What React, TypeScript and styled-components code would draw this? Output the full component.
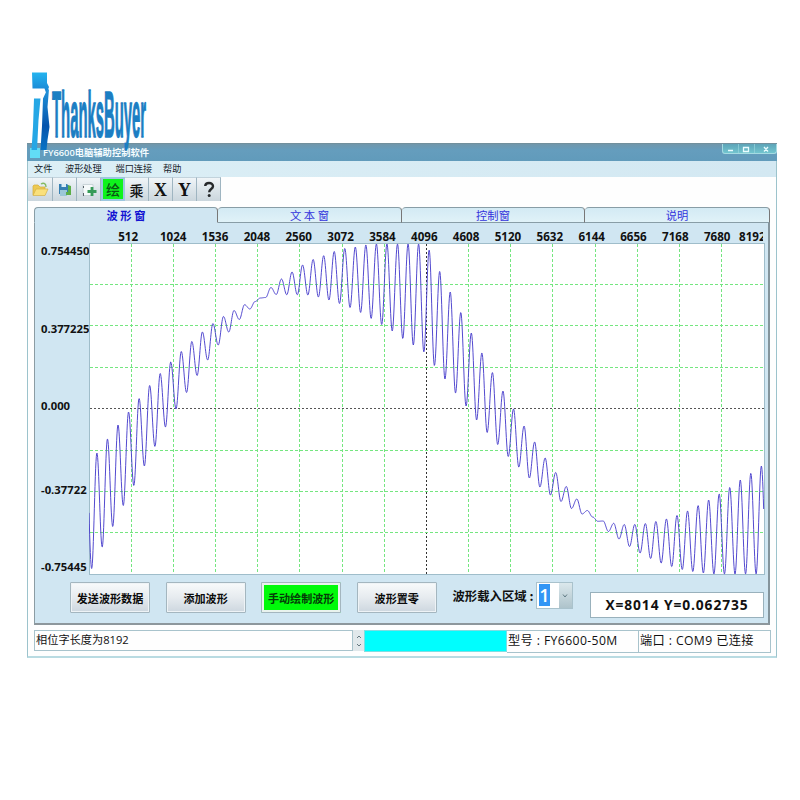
import React from "react";
import styled, { createGlobalStyle, css } from "styled-components";

const GlobalStyle = createGlobalStyle`
  * { box-sizing: border-box; }
  body { margin: 0; background: #fff; }
`;

const Page = styled.main`
  position: relative;
  width: 800px;
  height: 800px;
  padding: 143px 0 0 27px;
  overflow: hidden;
  background: #fff;
  color: #111;
  font-family: "Open Sans", "Noto Sans CJK SC", sans-serif;
`;

const Brand = styled.svg`
  position: absolute;
  left: 28px;
  top: 68px;
`;

const Window = styled.section`
  display: flex;
  flex-direction: column;
  width: 750px;
  height: 515px;
  border: 1px solid #9cc3cc;
  border-top: 0;
  border-bottom: 2px solid #b9dbe2;
  background: #fefefe;
`;

const TitleBar = styled.header`
  display: flex;
  justify-content: space-between;
  height: 18px;
  flex: none;
  margin: 0 -1px;
  padding-left: 3px;
  border-top: 1px solid #72909d;
  background: linear-gradient(#7197ab, #659dbd 35%, #619bbb);
`;

const Title = styled.div`
  display: flex;
  align-items: center;
  gap: 3px;
  color: #f4fcff;
  font-size: 9.3px;
  line-height: 17px;
  font-weight: 600;
  white-space: nowrap;
`;

const AppMark = styled.span`
  width: 10px;
  height: 10px;
  background: #62dcf5;
`;

const WindowButtons = styled.div`
  display: flex;
  width: 55px;
  height: 10px;
  border: 1px solid #a5dbe2;
  border-top: 0;
  border-radius: 0 0 3px 3px;
  background: linear-gradient(#5da4b8, #72c5cf);
`;

const MenuBar = styled.nav`
  display: flex;
  height: 16px;
  flex: none;
  padding-left: 6px;
  background: linear-gradient(90deg, #dceff6, #d3e8f2);
  font-size: 9.2px;
  line-height: 16px;
  color: #17242c;
`;

const MenuItem = styled.span<{ $width: number }>`
  width: ${(p) => p.$width}px;
  white-space: nowrap;
`;

const ToolBar = styled.div`
  display: grid;
  grid-template-columns: 25px repeat(7, 24px);
  height: 24px;
  flex: none;
  width: 193px;
  border-bottom: 1px solid #a3b3bc;
`;

const ToolButton = styled.button<{ $active?: boolean; $serif?: boolean }>`
  display: flex;
  align-items: center;
  justify-content: center;
  min-width: 0;
  padding: 0;
  border: 0;
  border-right: 1px solid #9fb5c1;
  border-top: 1px solid #c2d3dc;
  background: linear-gradient(#f0f5f8, #dce5ea 50%, #cbd6dd);
  color: #111;
  font: 500 14px/20px "Noto Sans CJK SC", sans-serif;
  ${(p) => p.$serif && css`font: 700 18px/20px "Liberation Serif", serif;`}
  ${(p) => p.$active && css`
    background: #0ef31c;
    border: 2px solid #9dc7df;
    color: #0a5314;
  `}
`;

const TabRow = styled.div`
  display: grid;
  grid-template-columns: 184px 184px 183px 185px;
  height: 16px;
  flex: none;
  margin: 6px 0 0 6px;
  width: 736px;
`;

const Tab = styled.div<{ $active?: boolean }>`
  border: 1px solid #889da6;
  border-left-width: ${(p) => (p.$active ? 1 : 0)}px;
  border-right: 1px solid #777;
  border-bottom-color: ${(p) => (p.$active ? "#d0e6f2" : "#889da6")};
  border-radius: 4px 4px 0 0;
  background: ${(p) => (p.$active ? "#d0e6f2" : "linear-gradient(#d3eaf4, #e0f2f8)")};
  color: ${(p) => (p.$active ? "#1414d2" : "#3434dc")};
  font: ${(p) => (p.$active ? 700 : 400)} 11.3px/14px "Noto Sans CJK SC", sans-serif;
  text-align: center;
`;

const Panel = styled.div`
  width: 736px;
  height: 402px;
  flex: none;
  margin-left: 6px;
  padding-left: 1px;
  border: 1px solid #8b9ca3;
  border-top: 0;
  border-right: 2px solid #84949c;
  border-bottom: 2px solid #8d979c;
  background: #d0e6f2;
`;

const TickRow = styled.div`
  display: grid;
  grid-template-columns: 48.3px repeat(14, 41.85px) 25px;
  height: 20px;
  margin-left: 68px;
  padding-top: 6px;
  font-size: 11.6px;
  line-height: 16px;
  font-weight: 700;
  text-align: center;
`;

const Tick = styled.span`
  &:last-child {
    overflow-x: clip;
    padding-left: 1px;
    text-align: left;
  }
`;

const PlotRow = styled.div`
  display: flex;
  height: 332px;
`;

const ScaleColumn = styled.div`
  display: grid;
  grid-template-rows: 77.5px 77.5px 83.5px 77.5px 16px;
  width: 53px;
  padding-left: 5px;
  overflow-x: clip;
  font-size: 11.3px;
  line-height: 15px;
  font-weight: 700;
`;

const Plot = styled.svg`
  display: block;
  flex: none;
`;

const ControlRow = styled.div`
  display: flex;
  height: 48px;
  padding: 7px 0 0 34px;
`;

const ActionButton = styled.button<{ $active?: boolean }>`
  width: 80px;
  height: 31px;
  flex: none;
  margin-right: 15.6px;
  padding: 0;
  border: 1px solid #a4b6bf;
  border-radius: 1px;
  background: linear-gradient(#f8fafb, #e6ebef 50%, #cdd7df);
  box-shadow: inset 0 0 0 1px #eef3f6;
  color: #0b0b0b;
  font: 700 11.1px/28px "Noto Sans CJK SC", sans-serif;
  white-space: nowrap;
  ${(p) => p.$active && css`
    background: #00fa0a;
    box-shadow: inset 0 0 0 2px #e9f3ee;
    color: #063c08;
  `}
`;

const RegionLabel = styled.label`
  width: 83.6px;
  flex: none;
  font: 600 12.4px/29px "Noto Sans CJK SC", sans-serif;
  white-space: pre;
`;

const Combo = styled.div`
  display: flex;
  width: 37px;
  height: 27px;
  flex: none;
  border: 1px solid #a9c2cc;
  background: #fff;
`;

const Selected = styled.span`
  width: 11px;
  height: 22px;
  margin: 1px 9px 0 2px;
  background: #3296f5;
  color: #fff;
  font-size: 18px;
  font-weight: 600;
  line-height: 22px;
  text-align: center;
`;

const ComboArrow = styled.span`
  display: flex;
  align-items: center;
  justify-content: center;
  flex: 1;
  background: linear-gradient(#dbe8ec, #aec3cb);
`;

const Readout = styled.output`
  width: 174px;
  height: 26px;
  flex: none;
  margin: 10px 0 0 17px;
  border: 1px solid #99b1bc;
  background: #fff;
  font-size: 13.8px;
  line-height: 23px;
  letter-spacing: 0.9px;
  font-weight: 700;
  text-align: center;
  white-space: nowrap;
`;

const StatusBar = styled.footer`
  display: flex;
  width: 737px;
  height: 23px;
  margin: 5px 0 0 6px;
  font-size: 12.2px;
  line-height: 20px;
  white-space: pre;
`;

const StatusCell = styled.div<{ $width: number; $short?: boolean }>`
  width: ${(p) => p.$width}px;
  height: ${(p) => (p.$short ? 21 : 23)}px;
  padding-left: 1px;
  border: 1px solid #a8c3cc;
  border-left-width: ${(p) => (p.$short ? 1 : 0)}px;
  letter-spacing: 0.4px;
  ${(p) => p.$short && css`
    font-size: 11.2px;
    line-height: 18px;
    letter-spacing: 0;
  `}
`;

const Spinner = styled.div`
  display: flex;
  align-items: center;
  justify-content: center;
  width: 11px;
  height: 21px;
  background: #e1e8eb;
`;

const Progress = styled.div`
  width: 143px;
  height: 22px;
  border: 1px solid #7fdde2;
  background: #00fefe;
`;

const PLOT = { left: 89, top: 243, width: 675, height: 332 };

// Alternating turning points of the modulated wave, half a carrier period apart.
const TURNING_POINTS = [
  568.5, 453, 547, 439, 526.5, 425, 505.5, 412, 485.5, 398.5, 466, 385.5, 446.5, 373.5, 427, 362,
  409, 351.5, 392.5, 341.5, 375.5, 332, 360, 323.5, 345, 316.5, 332, 310.5, 319.5, 304.7, 309,
  301.5, 298, 297.5, 287.5, 294.5, 279, 294.7, 272, 294.7, 265, 295, 259.5, 297, 255.7, 300,
  251.5, 303.5, 248.5, 307.5, 247, 312.5, 245, 318.5, 244, 324.5, 244, 331, 244, 338.5, 244,
  345, 244, 352, 250, 365.5, 271.5, 379, 292, 393, 312.5, 406, 333, 420, 353, 432.5, 372.5,
  444.5, 391, 456.5, 409, 467, 426, 478, 442, 487, 458, 495, 472.5, 501.5, 486.5, 508.5, 499,
  514, 510.5, 517, 521.3, 521, 531.5, 523.3, 539, 524.5, 546.5, 524.5, 553, 523.5, 558.5, 521.5,
  563, 519, 566.5, 515.5, 569.5, 511, 571.5, 505.5, 573, 500, 574, 494, 574, 487.5, 574, 480,
  574, 473.3, 574, 466, 574,
];

const HALF_PERIOD = 5.2735;
const FIRST_TURN = 91.64;

function waveY(x: number): number {
  const t = (x - FIRST_TURN) / HALF_PERIOD;
  if (t < 0) return 513 + 55.5 * Math.cos(Math.PI * t);
  const i = Math.min(Math.floor(t), TURNING_POINTS.length - 2);
  const a = TURNING_POINTS[i];
  const b = TURNING_POINTS[i + 1];
  return a + ((b - a) * (1 - Math.cos(Math.PI * (t - i)))) / 2;
}

const wavePath = Array.from({ length: PLOT.width * 3 }, (_, i) => {
  const x = PLOT.left + i / 3;
  return `${i ? "L" : "M"}${(x - PLOT.left).toFixed(2)} ${(waveY(x) - PLOT.top).toFixed(2)}`;
}).join("");

const TICKS = Array.from({ length: 16 }, (_, i) => 512 * (i + 1));
const SCALE = ["0.754450", "0.377225", "0.000", "-0.37722", "-0.75445"];

function WavePlot() {
  return (
    <Plot width={676} height={332}>
      <rect x="0.5" y="0.5" width="675" height="331" fill="#fff" stroke="#9fbdca" />
      {TICKS.slice(0, 15).map((tick, i) => {
        const x = Math.floor(42.18 * (i + 1)) + 0.5;
        return (
          <path key={tick} d={`M${x} 1V331`} stroke={i === 7 ? "#333" : "#74e680"} strokeDasharray={i === 7 ? "2 2" : "3 2"} />
        );
      })}
      {[1, 2, 3, 4, 5, 6, 7].map((n) => {
        const y = Math.floor(41.4 * n) + 0.5;
        return (
          <path key={n} d={`M1 ${y}H675`} stroke={n === 4 ? "#555" : "#74e680"} strokeDasharray={n === 4 ? "2 2" : "3 2"} />
        );
      })}
      <path d={wavePath} fill="none" stroke="#4a40cc" strokeWidth="0.95" />
    </Plot>
  );
}

function ThanksBuyerLogo() {
  return (
    <Brand width="122" height="86" viewBox="28 68 122 86">
      <defs>
        <linearGradient id="markTop" x1="0" y1="0" x2="0" y2="1">
          <stop offset="0" stopColor="#24b4ef" />
          <stop offset="1" stopColor="#187fd0" />
        </linearGradient>
        <linearGradient id="markStem" x1="0" y1="0" x2="0" y2="1">
          <stop offset="0" stopColor="#2195dc" />
          <stop offset=".6" stopColor="#0755ac" />
          <stop offset="1" stopColor="#0873c5" />
        </linearGradient>
      </defs>
      <path d="M32 72.5H47V83L49 87L46.500 94L44.500 88.500H32.500Z" fill="url(#markTop)" />
      <path d="M34 98.500H40.500L38.500 120L37 150H31.500L33 127Z" fill="#25a7e5" />
      <path d="M43 98.500L46.500 91L49 89L47.500 107L49.500 127L47.500 140L46.500 150H40.500L42 126Z" fill="url(#markStem)" />
      <text
        x="52" y="137" fontFamily="Liberation Sans, sans-serif" fontWeight="700" fontSize="65"
        textLength="94" lengthAdjust="spacingAndGlyphs" fill="#1c7ec3"
        stroke="#1c7ec3" strokeWidth="1.3"
      >
        ThanksBuyer
      </text>
    </Brand>
  );
}

function FolderIcon() {
  return (
    <svg width="18" height="18" viewBox="0 0 18 18">
      <path d="M2 14V5l1-1h4l2 2h5v3" fill="#edc953" stroke="#d6ad38" strokeWidth=".7" />
      <path d="M2 14.5L5 8h12l-3 6.5Z" fill="#fae07b" stroke="#d6b145" strokeWidth=".7" />
      <path d="M10 3c3-2 5 0 5 3" fill="none" stroke="#84ba63" strokeWidth="1.4" />
    </svg>
  );
}

function SaveIcon() {
  return (
    <svg width="18" height="18" viewBox="0 0 18 18">
      <path d="M3 3h8l2 2v8H3Z" fill="#367fb2" />
      <path d="M5.500 3H10v3H5.500Z" fill="#d9edf5" />
      <path d="M4 9h7v6H4Z" fill="#9cc7d7" />
      <path d="M12 4l3 1v9h-5v-3h2Z" fill="#5bae48" />
    </svg>
  );
}

function AddIcon() {
  return (
    <svg width="18" height="18" viewBox="0 0 18 18">
      <path d="M3 3.500h10v11H3Z" fill="#f6fafb" stroke="#c2cdd2" strokeWidth=".8" />
      <path d="M3.500 5v2M3.500 12v3" stroke="#59646b" />
      <path d="M12 6v9M7.500 10.500h9" stroke="#369b58" strokeWidth="2.800" />
    </svg>
  );
}

export default function App() {
  return (
    <Page>
      <GlobalStyle />
      <Window>
        <TitleBar>
          <Title><AppMark />FY6600电脑辅助控制软件</Title>
          <WindowButtons>
            <svg width="53" height="9" viewBox="0 0 53 9">
              <path d="M5 6.5h5M20.5 3.5h5v4h-5ZM41 3l4 4.5M45 3l-4 4.5" fill="none" stroke="#eafcff" strokeWidth="1.3" />
              <path d="M15.5 0v9M31.5 0v9" stroke="#98d4dc" strokeWidth=".7" />
            </svg>
          </WindowButtons>
        </TitleBar>
        <MenuBar>
          <MenuItem $width={31}>文件</MenuItem>
          <MenuItem $width={50.5}>波形处理</MenuItem>
          <MenuItem $width={47.5}>端口连接</MenuItem>
          <MenuItem $width={30}>帮助</MenuItem>
        </MenuBar>
        <ToolBar>
          <ToolButton><FolderIcon /></ToolButton>
          <ToolButton><SaveIcon /></ToolButton>
          <ToolButton><AddIcon /></ToolButton>
          <ToolButton $active>绘</ToolButton>
          <ToolButton>乘</ToolButton>
          <ToolButton $serif>X</ToolButton>
          <ToolButton $serif>Y</ToolButton>
          <ToolButton>
            <svg width="12" height="17" viewBox="0 0 12 17">
              <path d="M2.200 5C2.400 2.800 4 2 6 2c2.400 0 4 1.200 4 3.200C10 8 6.200 8 6.200 11.200" fill="none" stroke="#26292b" strokeWidth="2.400" />
              <circle cx="6.200" cy="14.500" r="1.500" fill="#26292b" />
            </svg>
          </ToolButton>
        </ToolBar>
        <TabRow>
          <Tab $active>波 形 窗</Tab>
          <Tab>文 本 窗</Tab>
          <Tab>控制窗</Tab>
          <Tab>说明</Tab>
        </TabRow>
        <Panel>
          <TickRow>{TICKS.map((tick) => <Tick key={tick}>{tick}</Tick>)}</TickRow>
          <PlotRow>
            <ScaleColumn>{SCALE.map((value) => <span key={value}>{value}</span>)}</ScaleColumn>
            <WavePlot />
          </PlotRow>
          <ControlRow>
            <ActionButton>发送波形数据</ActionButton>
            <ActionButton>添加波形</ActionButton>
            <ActionButton $active>手动绘制波形</ActionButton>
            <ActionButton>波形置零</ActionButton>
            <RegionLabel>波形载入区域 :</RegionLabel>
            <Combo>
              <Selected>1</Selected>
              <ComboArrow>
                <svg width="6" height="4" viewBox="0 0 6 4"><path d="M1 .5L3 3L5 .5" fill="none" stroke="#617a84" /></svg>
              </ComboArrow>
            </Combo>
            <Readout>X=8014 Y=0.062735</Readout>
          </ControlRow>
        </Panel>
        <StatusBar>
          <StatusCell $width={319} $short>相位字长度为8192</StatusCell>
          <Spinner>
            <svg width="6" height="14" viewBox="0 0 6 14"><path d="M1 4L3 2L5 4M1 10L3 12L5 10" fill="none" stroke="#64777f" /></svg>
          </Spinner>
          <Progress />
          <StatusCell $width={132}>型号 : FY6600-50M</StatusCell>
          <StatusCell $width={132}>端口 : COM9 已连接</StatusCell>
        </StatusBar>
      </Window>
      <ThanksBuyerLogo />
    </Page>
  );
}
